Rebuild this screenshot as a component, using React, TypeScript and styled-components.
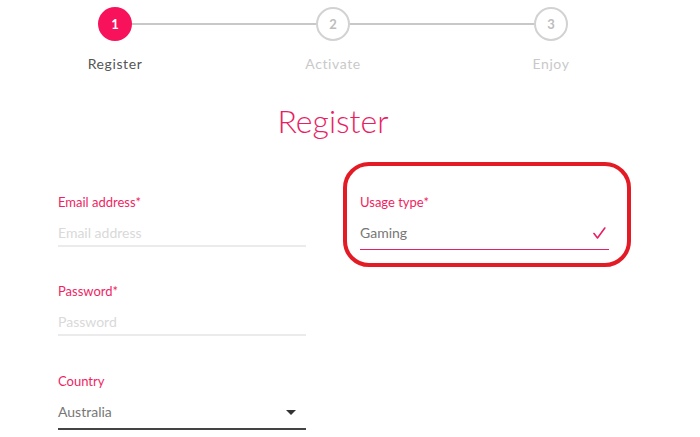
import React from 'react';
import styled, { createGlobalStyle } from 'styled-components';

const Global = createGlobalStyle`
  html, body { margin: 0; padding: 0; background: #fff; }
  body { font-family: Lato, "Open Sans", "Liberation Sans", sans-serif; }
  * { box-sizing: border-box; }
`;

const Page = styled.div`
  width: 666px;
  padding-top: 7px;
`;

const Track = styled.div`
  display: flex;
  align-items: center;
  padding: 0 98px;
`;

const Circle = styled.div<{ $active?: boolean }>`
  width: 34px;
  height: 34px;
  border-radius: 50%;
  display: flex;
  align-items: center;
  justify-content: center;
  font-size: 13px;
  font-weight: 700;
  background: ${p => (p.$active ? '#f7125b' : '#fff')};
  color: ${p => (p.$active ? '#fff' : '#bdbdbd')};
  border: ${p => (p.$active ? 'none' : '2px solid #d2d2d2')};
`;

const Connector = styled.div`
  flex: 1;
  height: 2px;
  background: #c8c8c8;
`;

const StepLabels = styled.div`
  display: grid;
  grid-template-columns: repeat(3, 218px);
  padding-left: 6px;
  margin-top: 13px;
`;

const StepLabel = styled.div<{ $active?: boolean }>`
  text-align: center;
  font-size: 14px;
  line-height: 20px;
  letter-spacing: 0.6px;
  color: ${p => (p.$active ? '#555' : '#c9c9c9')};
`;

const Title = styled.h1`
  margin: 27px 0 0;
  text-align: center;
  font-size: 32px;
  line-height: 40px;
  font-weight: 300;
  color: #e91e63;
`;

const Form = styled.div`
  display: grid;
  grid-template-columns: 248px 249px;
  column-gap: 54px;
  padding-left: 58px;
  margin-top: 53px;
`;

const Column = styled.div`
  display: flex;
  flex-direction: column;
  gap: 36px;
`;

const HighlightCell = styled.div`
  position: relative;
  align-self: start;
`;

const Highlight = styled.div`
  position: absolute;
  top: -32px;
  left: -17px;
  right: -22px;
  bottom: -17px;
  border: 4px solid #e31b25;
  border-radius: 26px;
  pointer-events: none;
`;

const Field = styled.div<{ $shift?: number }>`
  display: flex;
  flex-direction: column;
  margin-top: ${p => p.$shift ?? 0}px;
`;

const Label = styled.label<{ $gap: number }>`
  display: block;
  font-size: 13px;
  line-height: 16px;
  color: #ee1f63;
  margin-bottom: ${p => p.$gap}px;
`;

const TextInput = styled.input`
  display: block;
  width: 100%;
  border: none;
  outline: none;
  background: transparent;
  margin: 0;
  padding: 0 0 3px;
  font-family: inherit;
  font-size: 14px;
  line-height: 20px;
  height: 25px;
  border-bottom: 2px solid #ebebeb;
  color: #555;
  &::placeholder { color: #d9d9d9; opacity: 1; }
`;

const SelectBox = styled.div<{ $line: string; $thick: number }>`
  display: flex;
  align-items: center;
  justify-content: space-between;
  font-size: 14px;
  line-height: 20px;
  color: #777;
  padding-bottom: 6px;
  border-bottom: ${p => p.$thick}px solid ${p => p.$line};
`;

const Caret = styled.span`
  width: 0;
  height: 0;
  margin-right: 10px;
  border-left: 5px solid transparent;
  border-right: 5px solid transparent;
  border-top: 5px solid #333;
`;

const CheckIcon = styled.svg`
  margin-right: 3px;
  display: block;
`;

export default function App() {
  return (
    <Page>
      <Global />
      <Track>
        <Circle $active>1</Circle>
        <Connector />
        <Circle>2</Circle>
        <Connector />
        <Circle>3</Circle>
      </Track>
      <StepLabels>
        <StepLabel $active>Register</StepLabel>
        <StepLabel>Activate</StepLabel>
        <StepLabel>Enjoy</StepLabel>
      </StepLabels>
      <Title>Register</Title>
      <Form>
        <Column>
          <Field>
            <Label $gap={12}>Email address*</Label>
            <TextInput placeholder="Email address" />
          </Field>
          <Field>
            <Label $gap={12}>Password*</Label>
            <TextInput type="password" placeholder="Password" />
          </Field>
          <Field $shift={1}>
            <Label $gap={13}>Country</Label>
            <SelectBox $line="#444" $thick={2}>
              <span>Australia</span>
              <Caret />
            </SelectBox>
          </Field>
        </Column>
        <HighlightCell>
          <Field>
            <Label $gap={13}>Usage type*</Label>
            <SelectBox $line="#e91e63" $thick={1}>
              <span>Gaming</span>
              <CheckIcon width="13" height="12" viewBox="0 0 13 12">
                <path d="M1 6.5 L4.5 11 L11.8 1" fill="none" stroke="#e91e63" strokeWidth="1.6" strokeLinecap="round" strokeLinejoin="round" />
              </CheckIcon>
            </SelectBox>
          </Field>
          <Highlight />
        </HighlightCell>
      </Form>
    </Page>
  );
}
